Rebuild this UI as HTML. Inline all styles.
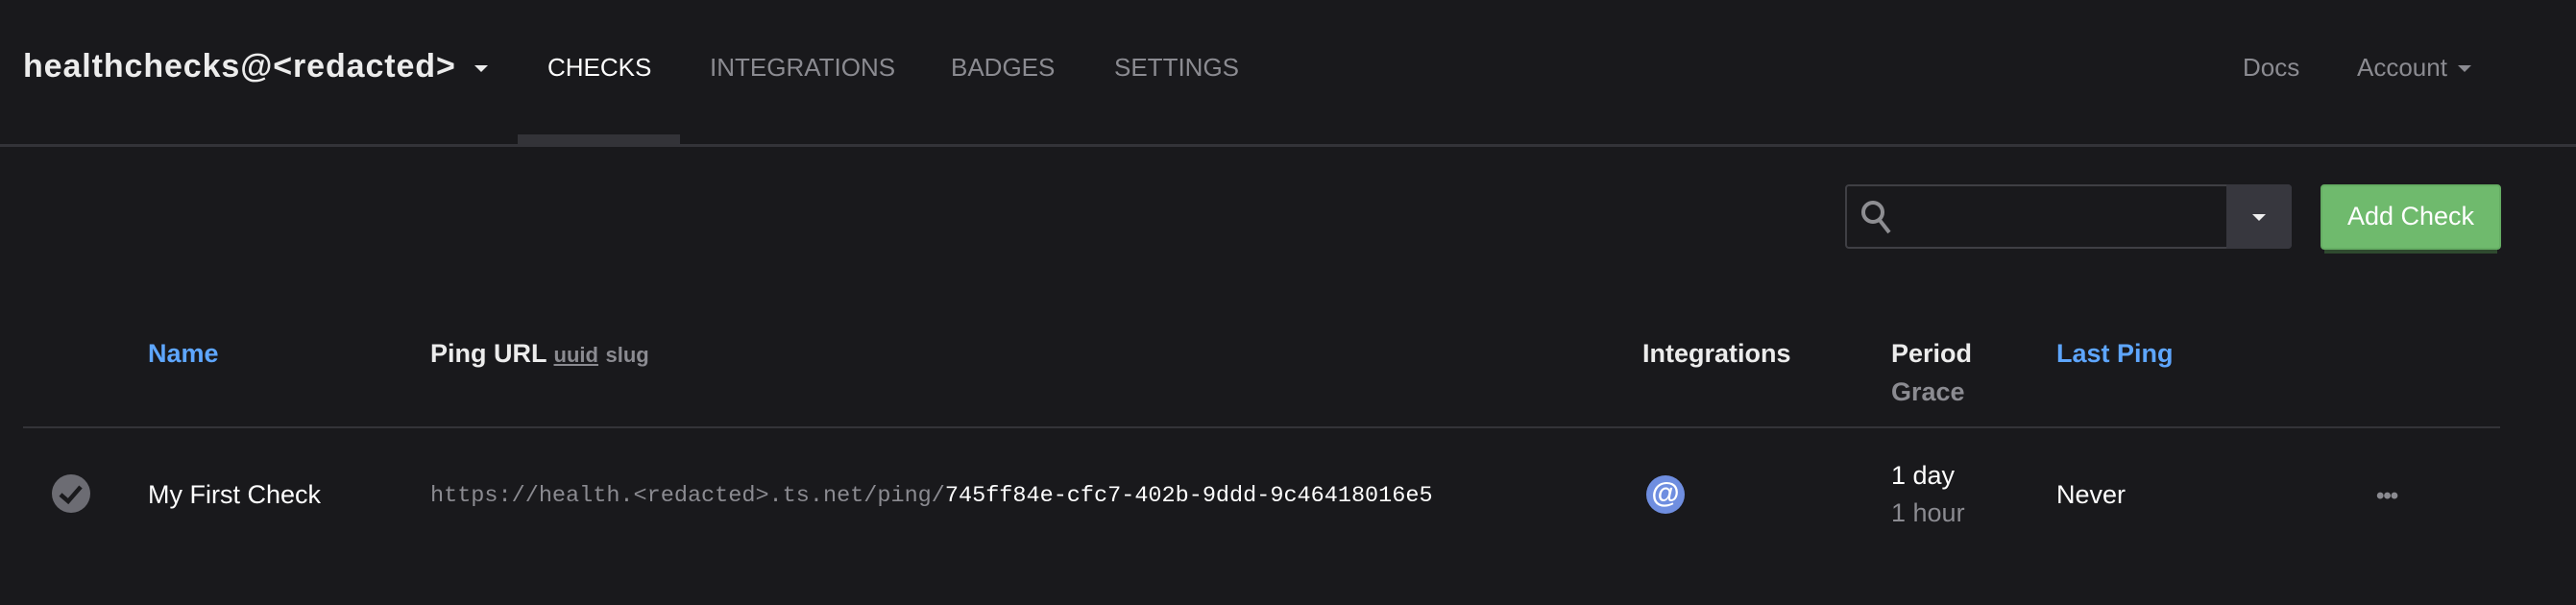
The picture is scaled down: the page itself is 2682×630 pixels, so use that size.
<!DOCTYPE html>
<html><head><meta charset="utf-8"><style>
*{margin:0;padding:0;box-sizing:border-box}
body{width:2682px;height:630px;background:#19191c;font-family:"Liberation Sans",sans-serif;position:relative;overflow:hidden;color:#fff}
.a{position:absolute;white-space:nowrap;line-height:1}
.nav{font-size:26px;color:#8b8b91;top:57px}
.h{font-size:27px;font-weight:bold;top:355px}
.blue{color:#5ea6ff}
.gray{color:#8b8b91}
</style></head><body>
<div class="a" style="left:24px;top:52px;font-size:34px;letter-spacing:0.9px;font-weight:bold;color:#ececec">healthchecks@&lt;redacted&gt;</div>
<div class="a" style="left:494px;top:68px;width:0;height:0;border-left:7px solid transparent;border-right:7px solid transparent;border-top:7px solid #ececec"></div>
<div class="a nav" style="left:570px;color:#fff">CHECKS</div>
<div class="a nav" style="left:739px">INTEGRATIONS</div>
<div class="a nav" style="left:990px">BADGES</div>
<div class="a nav" style="left:1160px">SETTINGS</div>
<div class="a nav" style="left:2335px">Docs</div>
<div class="a nav" style="left:2454px">Account</div>
<div class="a" style="left:2559px;top:68px;width:0;height:0;border-left:7px solid transparent;border-right:7px solid transparent;border-top:7px solid #8b8b91"></div>
<div class="a" style="left:539px;top:140px;width:169px;height:11px;background:#333338"></div>
<div class="a" style="left:0;top:150px;width:2682px;height:3px;background:#333338"></div>

<div class="a" style="left:1921px;top:192px;width:465px;height:67px;border:2px solid #3f3f44;border-radius:4px;background:#19191c"></div>
<div class="a" style="left:2318px;top:192px;width:68px;height:67px;background:#37373e;border-radius:0 4px 4px 0"></div>
<div class="a" style="left:2345px;top:223px;width:0;height:0;border-left:7px solid transparent;border-right:7px solid transparent;border-top:7px solid #eee"></div>
<svg class="a" style="left:1935px;top:206px" width="40" height="40" viewBox="0 0 40 40"><circle cx="15" cy="15" r="10" fill="none" stroke="#8e8e92" stroke-width="4"/><line x1="21" y1="22" x2="32" y2="36" stroke="#8e8e92" stroke-width="4"/></svg>
<div class="a" style="left:2420px;top:204px;width:180px;height:60px;background:#2f4a2f"></div>
<div class="a" style="left:2416px;top:192px;width:188px;height:68px;background:#6fba6d;border:2px solid #65ad63;border-radius:4px;font-size:27px;color:#fff;text-align:center;line-height:62px">Add Check</div>

<div class="a h blue" style="left:154px">Name</div>
<div class="a h" style="left:448px;color:#ececec">Ping URL <span style="font-size:22px;color:#8b8b91;text-decoration:underline">uuid</span> <span style="font-size:22px;color:#8b8b91">slug</span></div>
<div class="a h" style="left:1710px;color:#ececec">Integrations</div>
<div class="a h" style="left:1969px;color:#ececec">Period</div>
<div class="a h gray" style="left:1969px;top:395px">Grace</div>
<div class="a h blue" style="left:2141px">Last Ping</div>
<div class="a" style="left:24px;top:444px;width:2579px;height:2px;background:#333338"></div>

<svg class="a" style="left:54px;top:494px" width="40" height="40" viewBox="0 0 40 40"><circle cx="20" cy="20" r="20" fill="#6c6c73"/><path d="M9 21 L17 28 L30 13" fill="none" stroke="#19191c" stroke-width="4.5"/></svg>
<div class="a" style="left:154px;top:502px;font-size:27px;color:#fff">My First Check</div>
<div class="a" style="left:448px;top:505px;font-family:'Liberation Mono',monospace;font-size:23.5px;color:#8b8b91">https://health.&lt;redacted&gt;.ts.net/ping/<span style="color:#fff">745ff84e-cfc7-402b-9ddd-9c46418016e5</span></div>
<div class="a" style="left:1714px;top:495px;width:40px;height:40px;border-radius:50%;background:#6f8ee0;color:#fff;font-size:30px;font-weight:bold;text-align:center;line-height:38px">@</div>
<div class="a" style="left:1969px;top:482px;font-size:27px;color:#fff">1 day</div>
<div class="a gray" style="left:1969px;top:521px;font-size:27px">1 hour</div>
<div class="a" style="left:2141px;top:502px;font-size:27px;color:#fff">Never</div>
<div class="a" style="left:2474px;top:505px;font-size:24px;color:#8b8b91;font-weight:bold;letter-spacing:-1px">•••</div>
</body></html>
